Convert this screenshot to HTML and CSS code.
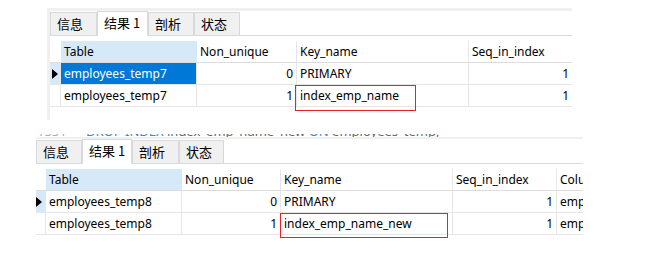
FILE: index.html
```html
<!DOCTYPE html>
<html lang="zh-CN">
<head>
    <meta charset="UTF-8">
    <title>index</title>
    <link rel="stylesheet" href="styles.css">
</head>
<body>
    <div class="panel panel-a">
        <div class="tabs">
            <span class="tab w47">信息</span>
            <span class="tab active w51">结果 1</span>
            <span class="tab w46">剖析</span>
            <span class="tab w46">状态</span>
        </div>
        <div class="grid grid-a">
            <div class="row head">
                <div class="cell ind"></div>
                <div class="cell hl">Table</div>
                <div class="cell">Non_unique</div>
                <div class="cell">Key_name</div>
                <div class="cell">Seq_in_index</div>
            </div>
            <div class="row">
                <div class="cell ind cur"><span class="arrow"></span></div>
                <div class="cell sel">employees_temp7</div>
                <div class="cell num">0</div>
                <div class="cell">PRIMARY</div>
                <div class="cell num">1</div>
            </div>
            <div class="row">
                <div class="cell ind"></div>
                <div class="cell">employees_temp7</div>
                <div class="cell num">1</div>
                <div class="cell mark">index_emp_name<span class="box box-a"></span></div>
                <div class="cell num">1</div>
            </div>
        </div>
    </div>

    <div class="sql">
        <div class="sql-line">
            <span class="ln">1551</span><span class="kw">DROP INDEX</span> index_emp_name_new <span class="kw">ON</span> employees_temp;
        </div>
    </div>

    <div class="panel panel-b">
        <div class="tabs">
            <span class="tab w46">信息</span>
            <span class="tab active w50">结果 1</span>
            <span class="tab w47">剖析</span>
            <span class="tab w45">状态</span>
        </div>
        <div class="grid grid-b">
            <div class="row head">
                <div class="cell ind"></div>
                <div class="cell hl">Table</div>
                <div class="cell">Non_unique</div>
                <div class="cell">Key_name</div>
                <div class="cell">Seq_in_index</div>
                <div class="cell">Column_name</div>
            </div>
            <div class="row">
                <div class="cell ind cur"><span class="arrow"></span></div>
                <div class="cell">employees_temp8</div>
                <div class="cell num">0</div>
                <div class="cell">PRIMARY</div>
                <div class="cell num">1</div>
                <div class="cell">emp_no</div>
            </div>
            <div class="row">
                <div class="cell ind"></div>
                <div class="cell">employees_temp8</div>
                <div class="cell num">1</div>
                <div class="cell mark">index_emp_name_new<span class="box box-b"></span></div>
                <div class="cell num">1</div>
                <div class="cell">emp_name</div>
            </div>
        </div>
    </div>
</body>
</html>
```
FILE: styles.css
```css
body {
    margin: 0;
    background: #fff;
    font-family: "Noto Sans", "Noto Sans CJK SC", sans-serif;
    font-size: 12px;
    color: #000;
}
.panel {
    box-sizing: border-box;
    overflow: hidden;
}
.panel-a {
    margin: 8px 0 0 47px;
    width: 525px;
    height: 112px;
    border-top: 3px solid #f0f0f0;
    border-left: 3px solid #f0f0f0;
}
.panel-b {
    margin-left: 36px;
    width: 547px;
    height: 100px;
}
.tabs {
    display: flex;
    align-items: flex-end;
    height: 24px;
    border-bottom: 1px solid #dadada;
}
.tab {
    box-sizing: border-box;
    height: 23px;
    padding-left: 6px;
    background: #f0f0f0;
    border: 1px solid #d9d9d9;
    border-bottom: none;
    font-family: "Noto Sans CJK SC", sans-serif;
    font-size: 13px;
    line-height: 22px;
}
.tab.active {
    height: 25px;
    margin-bottom: -1px;
    background: #fff;
    line-height: 22px;
}
.w45 { width: 45px; }
.w46 { width: 46px; }
.w47 { width: 47px; }
.w50 { width: 50px; }
.w51 { width: 51px; }
.grid {
    margin-top: 5px;
}
.row {
    display: grid;
    height: 22px;
}
.grid-a .row {
    grid-template-columns: 11px 136px 100px 172px 1fr;
}
.grid-b .row {
    grid-template-columns: 10px 136px 99px 172px 104px 1fr;
}
.cell {
    box-sizing: border-box;
    height: 22px;
    padding: 0 3px;
    border-right: 1px solid #e6e6e6;
    border-bottom: 1px solid #e6e6e6;
    line-height: 21px;
    white-space: nowrap;
    overflow: hidden;
}
.cell:last-child {
    border-right: none;
}
.head .cell {
    border-bottom-color: #dcdcdc;
}
.head .ind {
    border-right: none;
}
.hl {
    background: #d6e9f8;
    border-right-color: #d6e9f8;
}
.sel {
    background: #0078d7;
    color: #fff;
    border-right-color: #e6e6e6;
}
.num {
    text-align: right;
}
.ind {
    padding: 0;
    display: flex;
    align-items: center;
}
.ind.cur {
    background: #d6e9f8;
}
.grid-a .ind.cur {
    padding-left: 2px;
}
.arrow {
    width: 0;
    height: 0;
    border-left: 6px solid #000;
    border-top: 5px solid transparent;
    border-bottom: 5px solid transparent;
}
.mark {
    position: relative;
    overflow: visible;
}
.box {
    position: absolute;
    top: 0;
    border: 1px solid #e2242a;
    box-sizing: border-box;
}
.box-a {
    left: -2px;
    width: 121px;
    height: 26px;
}
.box-b {
    left: -1px;
    width: 168px;
    height: 25px;
}
.sql {
    margin: 14px 0 0 36px;
    width: 547px;
    height: 3px;
    overflow: hidden;
    border-bottom: 2px solid #f0f0f0;
}
.sql-line {
    margin-top: -10px;
    padding-left: 1px;
    font-size: 13px;
    line-height: 14px;
    color: #666;
    white-space: nowrap;
}
.ln {
    display: inline-block;
    width: 49px;
    color: #aaa;
}
.kw {
    color: #3a86e0;
}
```
